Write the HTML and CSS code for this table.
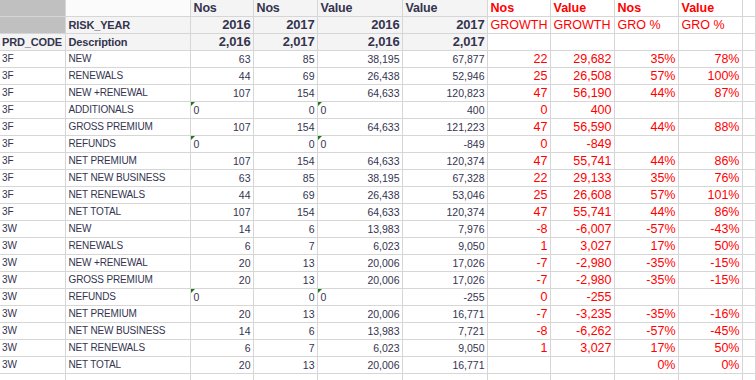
FILE: index.html
```html
<!doctype html>
<html lang="en">
<head>
    <meta charset="UTF-8" />
    <title>Risk year growth</title>
    <link rel="stylesheet" href="styles.css">
</head>
<body>
    <table class="sheet">
        <colgroup>
            <col style="width:65px"><col style="width:125px"><col style="width:63px"><col style="width:64px">
            <col style="width:85px"><col style="width:85px"><col style="width:63px"><col style="width:64px">
            <col style="width:64px"><col style="width:64px"><col>
        </colgroup>
        <tr class="h1">
            <td class="corner"></td>
            <td class="blank"></td>
            <td class="head">Nos</td>
            <td class="head">Nos</td>
            <td class="head">Value</td>
            <td class="head">Value</td>
            <td class="rhead">Nos</td>
            <td class="rhead">Value</td>
            <td class="rhead">Nos</td>
            <td class="rhead">Value</td>
            <td></td>
        </tr>
        <tr class="h2">
            <td class="corner"></td>
            <td class="label">RISK_YEAR</td>
            <td class="year">2016</td>
            <td class="year">2017</td>
            <td class="year">2016</td>
            <td class="year">2017</td>
            <td class="rsub">GROWTH</td>
            <td class="rsub">GROWTH</td>
            <td class="rsub">GRO %</td>
            <td class="rsub">GRO %</td>
            <td></td>
        </tr>
        <tr class="h3">
            <td class="label">PRD_CODE</td>
            <td class="label">Description</td>
            <td class="year">2,016</td>
            <td class="year">2,017</td>
            <td class="year">2,016</td>
            <td class="year">2,017</td>
            <td></td><td></td><td></td><td></td><td></td>
        </tr>
        <tr><td>3F</td><td>NEW</td><td class="n">63</td><td class="n">85</td><td class="n">38,195</td><td class="n">67,877</td><td class="r">22</td><td class="r">29,682</td><td class="r">35%</td><td class="r">78%</td><td></td></tr>
        <tr><td>3F</td><td>RENEWALS</td><td class="n">44</td><td class="n">69</td><td class="n">26,438</td><td class="n">52,946</td><td class="r">25</td><td class="r">26,508</td><td class="r">57%</td><td class="r">100%</td><td></td></tr>
        <tr><td>3F</td><td>NEW +RENEWAL</td><td class="n">107</td><td class="n">154</td><td class="n">64,633</td><td class="n">120,823</td><td class="r">47</td><td class="r">56,190</td><td class="r">44%</td><td class="r">87%</td><td></td></tr>
        <tr><td>3F</td><td>ADDITIONALS</td><td class="t">0</td><td class="n">0</td><td class="t">0</td><td class="n">400</td><td class="r">0</td><td class="r">400</td><td></td><td></td><td></td></tr>
        <tr><td>3F</td><td>GROSS PREMIUM</td><td class="n">107</td><td class="n">154</td><td class="n">64,633</td><td class="n">121,223</td><td class="r">47</td><td class="r">56,590</td><td class="r">44%</td><td class="r">88%</td><td></td></tr>
        <tr><td>3F</td><td>REFUNDS</td><td class="t">0</td><td class="n">0</td><td class="t">0</td><td class="n">-849</td><td class="r">0</td><td class="r">-849</td><td></td><td></td><td></td></tr>
        <tr><td>3F</td><td>NET PREMIUM</td><td class="n">107</td><td class="n">154</td><td class="n">64,633</td><td class="n">120,374</td><td class="r">47</td><td class="r">55,741</td><td class="r">44%</td><td class="r">86%</td><td></td></tr>
        <tr><td>3F</td><td>NET NEW BUSINESS</td><td class="n">63</td><td class="n">85</td><td class="n">38,195</td><td class="n">67,328</td><td class="r">22</td><td class="r">29,133</td><td class="r">35%</td><td class="r">76%</td><td></td></tr>
        <tr><td>3F</td><td>NET RENEWALS</td><td class="n">44</td><td class="n">69</td><td class="n">26,438</td><td class="n">53,046</td><td class="r">25</td><td class="r">26,608</td><td class="r">57%</td><td class="r">101%</td><td></td></tr>
        <tr><td>3F</td><td>NET TOTAL</td><td class="n">107</td><td class="n">154</td><td class="n">64,633</td><td class="n">120,374</td><td class="r">47</td><td class="r">55,741</td><td class="r">44%</td><td class="r">86%</td><td></td></tr>
        <tr><td>3W</td><td>NEW</td><td class="n">14</td><td class="n">6</td><td class="n">13,983</td><td class="n">7,976</td><td class="r">-8</td><td class="r">-6,007</td><td class="r">-57%</td><td class="r">-43%</td><td></td></tr>
        <tr><td>3W</td><td>RENEWALS</td><td class="n">6</td><td class="n">7</td><td class="n">6,023</td><td class="n">9,050</td><td class="r">1</td><td class="r">3,027</td><td class="r">17%</td><td class="r">50%</td><td></td></tr>
        <tr><td>3W</td><td>NEW +RENEWAL</td><td class="n">20</td><td class="n">13</td><td class="n">20,006</td><td class="n">17,026</td><td class="r">-7</td><td class="r">-2,980</td><td class="r">-35%</td><td class="r">-15%</td><td></td></tr>
        <tr><td>3W</td><td>GROSS PREMIUM</td><td class="n">20</td><td class="n">13</td><td class="n">20,006</td><td class="n">17,026</td><td class="r">-7</td><td class="r">-2,980</td><td class="r">-35%</td><td class="r">-15%</td><td></td></tr>
        <tr><td>3W</td><td>REFUNDS</td><td class="t">0</td><td class="n">0</td><td class="t">0</td><td class="n">-255</td><td class="r">0</td><td class="r">-255</td><td></td><td></td><td></td></tr>
        <tr><td>3W</td><td>NET PREMIUM</td><td class="n">20</td><td class="n">13</td><td class="n">20,006</td><td class="n">16,771</td><td class="r">-7</td><td class="r">-3,235</td><td class="r">-35%</td><td class="r">-16%</td><td></td></tr>
        <tr><td>3W</td><td>NET NEW BUSINESS</td><td class="n">14</td><td class="n">6</td><td class="n">13,983</td><td class="n">7,721</td><td class="r">-8</td><td class="r">-6,262</td><td class="r">-57%</td><td class="r">-45%</td><td></td></tr>
        <tr><td>3W</td><td>NET RENEWALS</td><td class="n">6</td><td class="n">7</td><td class="n">6,023</td><td class="n">9,050</td><td class="r">1</td><td class="r">3,027</td><td class="r">17%</td><td class="r">50%</td><td></td></tr>
        <tr><td>3W</td><td>NET TOTAL</td><td class="n">20</td><td class="n">13</td><td class="n">20,006</td><td class="n">16,771</td><td class="r"></td><td class="r"></td><td class="r">0%</td><td class="r">0%</td><td></td></tr>
        <tr><td></td><td></td><td></td><td></td><td></td><td></td><td></td><td></td><td></td><td></td><td></td></tr>
    </table>
</body>
</html>
```

FILE: styles.css
```css
* {
    margin: 0;
    padding: 0;
    box-sizing: border-box;
}

body {
    background: white;
    font-family: "Liberation Sans", Arial, sans-serif;
    color: #34344f;
    overflow: hidden;
}

.sheet {
    width: 756px;
    table-layout: fixed;
    border-collapse: collapse;
}

.sheet td {
    height: 17px;
    padding: 0 2px 0 3px;
    border: 1px solid #d6d6d6;
    font-size: 10px;
    letter-spacing: -0.15px;
    white-space: nowrap;
    overflow: hidden;
    vertical-align: middle;
}

.sheet tr td:first-child {
    border-left: none;
    padding-left: 2px;
}

.h1 td {
    border-top: none;
    height: 16px;
}

.corner {
    background: #c0c0c0;
}

.blank {
    background: #fbfbfb;
}

.head,
.year,
.label {
    background: #f4f4f4;
    font-weight: bold;
    letter-spacing: 0;
}

.head {
    font-size: 12.5px !important;
}

.year {
    font-size: 13px !important;
    text-align: right;
}

.label {
    font-size: 11px !important;
}

.rhead {
    color: #ff0000;
    font-weight: bold;
    font-size: 12.5px !important;
    letter-spacing: 0 !important;
}

.rsub {
    color: #ff0000;
    font-size: 12.5px !important;
    letter-spacing: 0 !important;
}

.n {
    text-align: right;
    font-size: 10.5px !important;
    letter-spacing: 0 !important;
}

.r {
    text-align: right;
    color: #ff0000;
    font-size: 12.5px !important;
    letter-spacing: 0 !important;
}

/* numbers stored as text: left aligned with the green flag */
.t {
    position: relative;
    font-size: 10.5px !important;
    letter-spacing: 0 !important;
}

.t::before {
    content: "";
    position: absolute;
    top: 0;
    left: 0;
    border-top: 4px solid #1a7a1a;
    border-right: 4px solid transparent;
}
```
